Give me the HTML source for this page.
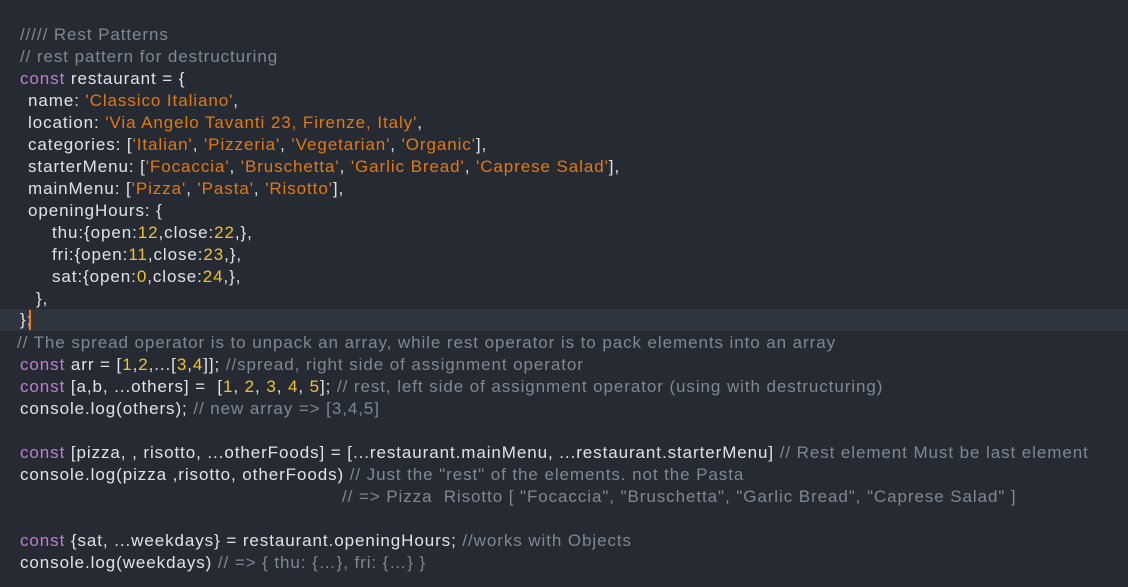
<!DOCTYPE html>
<html><head><meta charset="utf-8"><style>
html,body{margin:0;padding:0;background:#262b33;width:1128px;height:587px;overflow:hidden}
.l{position:absolute;left:0;height:22px;line-height:22px;font-family:"Liberation Sans",sans-serif;font-size:17px;letter-spacing:0.92px;color:#dfe3e8;white-space:pre}
.c{color:#7e8893}.k{color:#c37ad8}.s{color:#e5780d}.n{color:#f2c12e}
.hl{position:absolute;left:0;top:309px;width:1128px;height:22px;background:#2f353e}
.cur{position:absolute;left:29px;top:310px;width:2px;height:20px;background:#f07c12}
</style></head><body>
<div class="hl"></div>
<div class="l" style="top:24px;left:20px"><span class="c">///// Rest Patterns</span></div>
<div class="l" style="top:46px;left:20px"><span class="c">// rest pattern for destructuring</span></div>
<div class="l" style="top:68px;left:20px"><span class="k">const</span> restaurant = {</div>
<div class="l" style="top:90px;left:28px">name: <span class="s">'Classico Italiano'</span>,</div>
<div class="l" style="top:112px;left:28px">location: <span class="s">'Via Angelo Tavanti 23, Firenze, Italy'</span>,</div>
<div class="l" style="top:134px;left:28px">categories: [<span class="s">'Italian'</span>, <span class="s">'Pizzeria'</span>, <span class="s">'Vegetarian'</span>, <span class="s">'Organic'</span>],</div>
<div class="l" style="top:156px;left:28px">starterMenu: [<span class="s">'Focaccia'</span>, <span class="s">'Bruschetta'</span>, <span class="s">'Garlic Bread'</span>, <span class="s">'Caprese Salad'</span>],</div>
<div class="l" style="top:178px;left:28px">mainMenu: [<span class="s">'Pizza'</span>, <span class="s">'Pasta'</span>, <span class="s">'Risotto'</span>],</div>
<div class="l" style="top:200px;left:28px">openingHours: {</div>
<div class="l" style="top:222px;left:52px">thu:{open:<span class="n">12</span>,close:<span class="n">22</span>,},</div>
<div class="l" style="top:244px;left:52px">fri:{open:<span class="n">11</span>,close:<span class="n">23</span>,},</div>
<div class="l" style="top:266px;left:52px">sat:{open:<span class="n">0</span>,close:<span class="n">24</span>,},</div>
<div class="l" style="top:288px;left:36px">},</div>
<div class="l" style="top:309px;left:20px">};</div>
<div class="cur"></div>
<div class="l" style="top:332px;left:17px"><span class="c">// The spread operator is to unpack an array, while rest operator is to pack elements into an array</span></div>
<div class="l" style="top:354px;left:20px"><span class="k">const</span> arr = [<span class="n">1</span>,<span class="n">2</span>,...[<span class="n">3</span>,<span class="n">4</span>]]; <span class="c">//spread, right side of assignment operator</span></div>
<div class="l" style="top:376px;left:20px"><span class="k">const</span> [a,b, ...others] =  [<span class="n">1</span>, <span class="n">2</span>, <span class="n">3</span>, <span class="n">4</span>, <span class="n">5</span>]; <span class="c">// rest, left side of assignment operator (using with destructuring)</span></div>
<div class="l" style="top:398px;left:20px">console.log(others); <span class="c">// new array =&gt; [3,4,5]</span></div>
<div class="l" style="top:442px;left:20px"><span class="k">const</span> [pizza, , risotto, ...otherFoods] = [...restaurant.mainMenu, ...restaurant.starterMenu] <span class="c">// Rest element Must be last element</span></div>
<div class="l" style="top:464px;left:20px">console.log(pizza ,risotto, otherFoods) <span class="c">// Just the "rest" of the elements. not the Pasta</span></div>
<div class="l" style="top:486px;left:342px"><span class="c">// =&gt; Pizza  Risotto [ "Focaccia", "Bruschetta", "Garlic Bread", "Caprese Salad" ]</span></div>
<div class="l" style="top:530px;left:20px"><span class="k">const</span> {sat, ...weekdays} = restaurant.openingHours; <span class="c">//works with Objects</span></div>
<div class="l" style="top:552px;left:20px">console.log(weekdays) <span class="c">// =&gt; { thu: {…}, fri: {…} }</span></div>
</body></html>
